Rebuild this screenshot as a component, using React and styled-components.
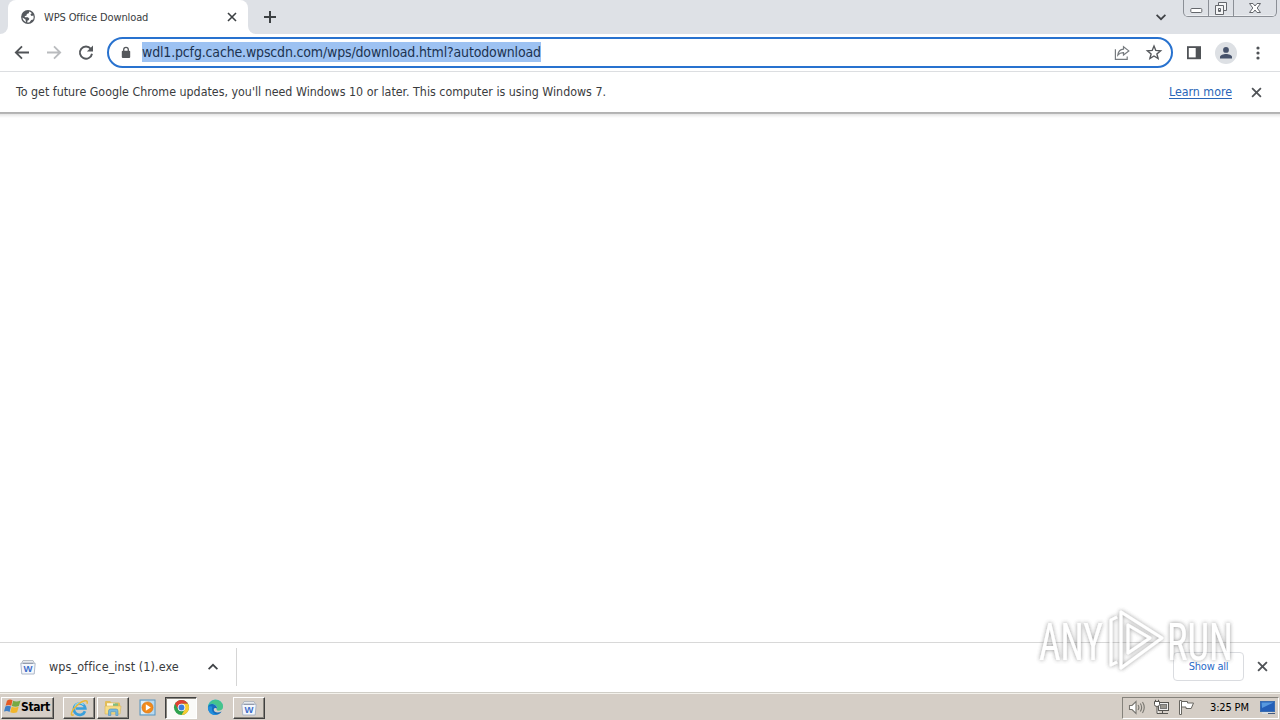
import styled, { createGlobalStyle, css } from "styled-components"

const GlobalStyle = createGlobalStyle`
    * {
        box-sizing: border-box;
    }
    body {
        margin: 0;
        overflow: hidden;
        font-family: "DejaVu Sans Condensed", "DejaVu Sans", Tahoma, sans-serif;
        font-stretch: condensed;
        color: #3a3c3e;
    }
    svg {
        display: block;
        flex-shrink: 0;
    }
`
const Screen = styled.div`
    width: 1280px;
    height: 720px;
    display: flex;
    flex-direction: column;
    background: #fff;
    overflow: hidden;
`
const Label = styled.span`
    font-size: ${(props) => props.$size || 12}px;
    letter-spacing: ${(props) => props.$spacing || 0}px;
    font-weight: ${(props) => (props.$bold ? "bold" : "normal")};
    color: ${(props) => props.$color || "#3a3c3e"};
    white-space: nowrap;
`

// tab strip
const TabStrip = styled.div`
    height: 34px;
    flex-shrink: 0;
    display: flex;
    background: #dee1e6;
`
const TabEdge = styled.div`
    width: 8px;
    background: #fff;

    &::before {
        content: "";
        display: block;
        height: 34px;
        background: #dee1e6;
        border-radius: ${(props) => (props.$right ? "0 0 0 8px" : "0 0 8px 0")};
    }
`
const Tab = styled.div`
    width: 240px;
    display: flex;
    align-items: center;
    padding: 0 11px 0 13px;
    background: #fff;
    border-radius: 8px 8px 0 0;
`
const TabTitle = styled.div`
    flex: 1;
    padding-left: 9px;
    line-height: 32px;
`
const NewTab = styled.div`
    padding: 11px 0 0 8px;
`
const TabSearch = styled.div`
    margin-left: auto;
    padding: 12px 17px 0 0;
`
const WindowButtons = styled.div`
    display: flex;
    width: 94px;
    height: 17px;
    margin-right: 3px;
    border: 1px solid #8b8f96;
    border-top: none;
    border-radius: 0 0 5px 5px;
    overflow: hidden;
`
const WindowButton = styled.div`
    width: ${(props) => props.$width}px;
    display: flex;
    justify-content: center;
    align-items: flex-start;
    border-right: ${(props) => (props.$last ? "none" : "1px solid #8b8f96")};
    box-shadow: inset 0 -1px #eceef1;
`

// toolbar
const Toolbar = styled.div`
    height: 38px;
    flex-shrink: 0;
    display: flex;
    align-items: center;
    padding: 0 20px 0 12px;
    border-bottom: 1px solid #dcdee1;
`
const NavButtons = styled.div`
    display: flex;
    gap: 12px;
    width: 95px;
`
const AddressBar = styled.div`
    width: 1066px;
    height: 31px;
    display: flex;
    align-items: center;
    padding: 0 8px 0 11px;
    border: 2px solid #2872cf;
    border-radius: 16px;
    background: #fff;
`
const Url = styled.div`
    height: 20px;
    margin: 0 0 1px 10px;
    line-height: 20px;
    background: #9dc2f2;
`
const AddressActions = styled.div`
    margin-left: auto;
    display: flex;
    gap: 14px;
`
const ToolbarActions = styled.div`
    flex: 1;
    display: flex;
    align-items: center;
    justify-content: flex-end;
`
const Avatar = styled.div`
    width: 22px;
    height: 22px;
    margin: 0 19px 0 14px;
    border-radius: 50%;
    background: #dde0e4;
    display: flex;
    align-items: center;
    justify-content: center;
`

// update notice
const InfoBar = styled.div`
    height: 40px;
    flex-shrink: 0;
    display: flex;
    align-items: center;
    padding: 0 18px 0 16px;
`
const LearnMore = styled.a`
    margin-left: auto;
    margin-right: 19px;
    font-size: 12.3px;
    color: #2a66b8;
    text-decoration: underline;
    text-underline-offset: 2px;
`
const Page = styled.div`
    flex: 1;
    background: linear-gradient(#b0b0b0 0, #b8b8b8 2px, #e4e4e4 2px, #f3f3f3 4px, #fff 6px);
`

// downloads
const DownloadBar = styled.div`
    height: 50px;
    flex-shrink: 0;
    display: flex;
    align-items: center;
    padding: 0 12px 2px 20px;
    border-top: 1px solid #d8d8d8;
`
const DownloadItem = styled.div`
    width: 217px;
    height: 38px;
    display: flex;
    align-items: center;
    border-right: 1px solid #d5d5d5;
`
const FileName = styled.div`
    width: 172px;
    padding: 0 0 2px 13px;
`
const ShowAll = styled.button`
    width: 71px;
    height: 29px;
    margin-left: auto;
    margin-right: 13px;
    padding: 0 0 3px;
    border: 1px solid #dadce0;
    border-radius: 4px;
    background: #fff;
    font-family: inherit;
    font-stretch: condensed;
`

// taskbar
const Taskbar = styled.div`
    height: 28px;
    flex-shrink: 0;
    display: flex;
    align-items: center;
    padding: 2px 1px 0 1px;
    background: #d5cec6;
    border-top: 1px solid #d0cec7;
    box-shadow: inset 0 1px #f4f2ec;
`
const raised = css`
    border: 1px solid;
    border-color: #fff #404040 #404040 #fff;
    box-shadow: inset -1px -1px #88857e;
`
const pressed = css`
    border: 1px solid;
    border-color: #404040 #fff #fff #404040;
    box-shadow: inset 1px 1px #88857e;
    background: #fafaf8;
`
const StartButton = styled.div`
    ${raised}
    width: 53px;
    height: 22px;
    display: flex;
    align-items: center;
    padding: 0 0 2px 2px;
    line-height: 18px;
    margin-right: 9px;
`
const TaskButton = styled.div`
    width: 32px;
    height: 22px;
    margin-right: 2px;
    display: flex;
    align-items: center;
    justify-content: center;
    ${(props) => props.$raised && raised}
    ${(props) => props.$pressed && pressed}
`
const Tray = styled.div`
    width: 157px;
    height: 22px;
    margin-left: auto;
    display: flex;
    align-items: center;
    padding-left: 5px;
    border: 1px solid;
    border-color: #85827b #fff #fff #85827b;
`
const TrayIcons = styled.div`
    display: flex;
    gap: 7px;
    width: 82px;
`
const Clock = styled.div`
    width: 50px;
    padding-bottom: 4px;
`
const Watermark = styled.div`
    position: absolute;
    left: 1030px;
    top: 600px;
    opacity: 0.85;
    pointer-events: none;
`

const Cross = ({ size = 10, color = "#3c4043", weight = 1.8 }) => (
    <svg width={size} height={size} viewBox="0 0 10 10" stroke={color} strokeWidth={weight}>
        <path d="M1 1l8 8M9 1L1 9" />
    </svg>
)

const Globe = () => (
    <svg width="14" height="14" viewBox="0 0 14 14">
        <circle cx="7" cy="7" r="6.9" fill="#55595e" />
        <path d="M8.2 1.6L7.8 3.3 5.8 4 5.6 5.6 3.6 6.2 4 7.3H6.9L8.4 8.8 7.6 10.2 6.6 10.4 6.2 12.5A5.6 5.6 0 0 0 8.6 12.3L10.2 10 12.2 9.5A5.6 5.6 0 0 0 12.4 5.6L10.6 6 9.3 4.8 10.6 3.6 10.2 2.4Z" fill="#fff" />
        <path d="M1.5 7.6L4.5 9.6 5 12.2A5.6 5.6 0 0 1 1.5 7.6Z" fill="#fff" />
    </svg>
)

const Arrow = ({ color, flip }) => (
    <svg width="20" height="20" viewBox="0 0 20 20" fill="none" stroke={color} strokeWidth="1.8">
        <path d={flip ? "M3 9.5H16M10 3.3L16.2 9.5 10 15.7" : "M17 9.5H4M10 3.3L3.8 9.5 10 15.7"} />
    </svg>
)

const Reload = () => (
    <svg width="20" height="20" viewBox="0 0 20 20" fill="none">
        <path d="M14.8 5.8A6.1 6.1 0 1 0 16 10.7" stroke="#55585c" strokeWidth="1.9" />
        <path d="M17 2.5V8.6H10.9Z" fill="#55585c" />
    </svg>
)

const Lock = () => (
    <svg width="12" height="14" viewBox="0 0 12 14">
        <path d="M3.7 5.5V3.6a2.3 2.3 0 0 1 4.6 0V5.5" fill="none" stroke="#55585c" strokeWidth="1.3" />
        <rect x="1.8" y="4.8" width="8.4" height="7.2" rx="1" fill="#55585c" />
    </svg>
)

const Share = () => (
    <svg width="18" height="18" viewBox="0 0 18 18" fill="none" stroke="#777b7f" strokeWidth="1.2">
        <path d="M2.4 5.2V15.4H14.2V12.4" />
        <path d="M10.5 2.8L15.8 6.9 10.5 11V8.7C8 8.6 6.3 9.3 4.8 11.1 5.2 8 7 5.5 10.5 5.2Z" />
    </svg>
)

const Star = () => (
    <svg width="18" height="18" viewBox="0 0 18 18" fill="none" stroke="#55585c" strokeWidth="1.4">
        <path d="M9 2L10.8 6.4 15.6 6.8 11.9 9.9 13.1 14.5 9 12 4.9 14.5 6.1 9.9 2.4 6.8 7.2 6.4Z" />
    </svg>
)

const SidePanel = () => (
    <svg width="14" height="14" viewBox="0 0 14 14">
        <rect x=".9" y="1.1" width="12.2" height="11.2" fill="#fff" stroke="#505357" strokeWidth="1.8" />
        <path d="M8.7 1h5v12h-5z" fill="#505357" />
    </svg>
)

const Person = () => (
    <svg width="12" height="12" viewBox="0 0 12 12" fill="#46526b">
        <circle cx="6" cy="2.9" r="2.9" />
        <path d="M0 11.5V10C0 8 3.5 7 6 7s6 1 6 3v1.5z" />
    </svg>
)

const Dots = () => (
    <svg width="4" height="14" viewBox="0 0 4 14" fill="#505357">
        <circle cx="2" cy="2" r="1.6" />
        <circle cx="2" cy="7" r="1.6" />
        <circle cx="2" cy="12" r="1.6" />
    </svg>
)

const Chevron = ({ up }) => (
    <svg width="10" height="10" viewBox="0 0 10 10" fill="none" stroke="#3f4246" strokeWidth="1.7">
        <path d={up ? "M.6 7.2L5 2.8 9.4 7.2" : "M.6 2.8L5 7.2 9.4 2.8"} />
    </svg>
)

const Installer = () => (
    <svg width="16" height="16" viewBox="0 0 16 16">
        <path d="M1.5 4.5L3 1.5H13L14.5 4.5Z" fill="#e7eaee" stroke="#a8aeb8" strokeWidth=".8" />
        <path d="M.8 4.3H15.2L14.2 15H1.8Z" fill="#f4f7fc" stroke="#a5b0c3" strokeWidth=".9" />
        <path d="M3 4.3H13" stroke="#8b94a4" strokeWidth="1" />
        <text x="8" y="12.6" textAnchor="middle" fontFamily="Liberation Sans, sans-serif" fontSize="9.5" fontWeight="bold" fill="#416fca">W</text>
    </svg>
)

const WindowsFlag = () => (
    <svg width="17" height="17" viewBox="0 0 16 16">
        <path d="M2.8 2.5Q5.5 .6 8 2.2L6.8 7.4Q4.5 6 1.5 7.2Z" fill="#e55b24" />
        <path d="M8.6 2.6Q11.8 4.2 15.6 2.3L14 7.6Q11 9 7.4 7.6Z" fill="#76a943" />
        <path d="M1.3 7.9Q4 6.6 6.6 8.1L5.2 13.2Q3 11.7 0 12.8Z" fill="#3f7fc6" />
        <path d="M7.2 8.3Q10.4 9.7 13.8 8.2L12.3 13.4Q9 14.8 5.9 13.5Z" fill="#f2b62b" />
    </svg>
)

const Explorer = () => (
    <svg width="19" height="18" viewBox="0 0 19 18" fill="none">
        <path d="M15 12.2A5.7 5.7 0 1 1 15.3 9.5H6" stroke="#3aa0dc" strokeWidth="2.7" />
        <path d="M4.8 8.4A4.8 4.8 0 0 1 13.5 6" stroke="#90dcf8" strokeWidth="1.1" />
        <path d="M3.7 15.6C-.2 18 .8 11.8 7.2 6.1 13.5 .7 18.5 .2 17 4.7" stroke="#e9b838" strokeWidth="1.5" />
    </svg>
)

const Folder = () => (
    <svg width="18" height="18" viewBox="0 0 18 18">
        <path d="M1 3Q1 2 2 2H6L7.5 3.5H15Q16 3.5 16 5V15H1Z" fill="#e2bd58" />
        <path d="M3 4.2H11V8H3Z" fill="#fff7dc" />
        <path d="M9 4.5H14V8H9Z" fill="#7fbf84" />
        <path d="M1 7H17L16 15H1Z" fill="#f8dd83" stroke="#d7b45a" strokeWidth=".6" />
        <path d="M4.5 16.5V12Q4.5 10 6.5 10H12Q14 10 14 12V16.5H11.8V12.8H6.8V16.5Z" fill="#77b9df" stroke="#4b8dba" strokeWidth=".6" />
    </svg>
)

const MediaPlayer = () => (
    <svg width="17" height="17" viewBox="0 0 17 17">
        <rect x="1" y="1" width="15" height="15" fill="#b8d9ef" stroke="#5694c0" />
        <path d="M2 2H9V15H2Z" fill="#dceefa" />
        <circle cx="8.5" cy="8.5" r="5.6" fill="#f18a1c" stroke="#d46e0e" strokeWidth=".6" />
        <path d="M6.8 5.3V11.7L11.8 8.5Z" fill="#fff" />
    </svg>
)

const ChromeLogo = () => (
    <svg width="17" height="17" viewBox="0 0 18 18">
        <circle cx="9" cy="9" r="8" fill="#2fa24f" />
        <path d="M2.1 5L5.6 11 9 9V5H15.9A8 8 0 0 0 2.1 5Z" fill="#df4032" />
        <path d="M15.9 5A8 8 0 0 1 9 17L12.5 11 9 5Z" fill="#f8cb32" />
        <circle cx="9" cy="9" r="4" fill="#fff" />
        <circle cx="9" cy="9" r="3.1" fill="#3b7ddd" />
    </svg>
)

const EdgeLogo = () => (
    <svg width="17" height="17" viewBox="0 0 18 18">
        <path d="M1 9A8 8 0 0 1 17 8C17 11 14.8 12.2 12.4 12.2 10.7 12.2 9.7 11.3 10.5 10.2 12 8 9 5.8 6 6.2 3 6.6 1.5 8.2 1 10Z" fill="#35bdb5" />
        <path d="M9 1A8 8 0 0 1 17 8C17 10.8 15 12.2 12.5 12.2 10.5 12.2 9.8 11.2 10.6 10 11.9 5.8 7 4 3 5.2A8 8 0 0 1 9 1Z" fill="#50c875" opacity=".65" />
        <path d="M1 9C1.4 5.9 4.7 4.8 7.2 5.7 10 6.6 11 8.5 10.5 10.2 9 9 7.2 9.7 7.2 11.4 7.2 14 11 15.4 15.5 13.3A8 8 0 0 1 1 9Z" fill="#176dbd" />
        <path d="M5.8 8.2C3.7 12.3 7.2 16.8 12 16.3 6 18.8 1 14.7 1 9 2 7.5 4 7.1 5.8 8.2Z" fill="#218edc" />
    </svg>
)

const Speaker = () => (
    <svg width="18" height="18" viewBox="0 0 18 18" fill="none" stroke="#77756f" strokeWidth="1.1">
        <path d="M1.5 6.5H4L8 2.5V14.5L4 10.5H1.5Z" fill="#fff" />
        <path d="M10 6Q11.8 8.5 10 11M12.3 4.5Q15 8.5 12.3 12.5M14.5 3Q18 8.5 14.5 14" />
    </svg>
)

const Network = () => (
    <svg width="18" height="18" viewBox="0 0 18 18" fill="none" stroke="#55534f">
        <rect x="5.5" y="3.5" width="10" height="8" fill="#eee" />
        <rect x="7.5" y="5.5" width="6" height="4" fill="#99968f" stroke="#777" />
        <path d="M9.5 12V14.5M6 14.5H15" />
        <path d="M1.5 2.5H6.5V5.5Q6.5 7.5 4 7.5 1.5 7.5 1.5 5.5ZM2.5 .8V3M5.5 .8V3M4 8V14.5H6" fill="#fff" />
    </svg>
)

const Flag = () => (
    <svg width="18" height="18" viewBox="0 0 18 18" fill="#fff" stroke="#686660" strokeWidth="1">
        <path d="M1.5 1.5H3.5V15.5H1.5Z" />
        <path d="M3.5 2.5H9.5V4H15.5L13.2 9.5H8V8H3.5Z" />
    </svg>
)

const Desktop = () => (
    <svg width="17" height="15" viewBox="0 0 17 15">
        <rect x=".5" y="1.5" width="14" height="10" fill="#245fb8" stroke="#3a6db0" />
        <path d="M1.5 2.5H13.5L2 8Z" fill="#5799df" />
        <path d="M2 13H12" stroke="#dcebfa" />
        <path d="M8 13.5H15" stroke="#425b80" />
    </svg>
)

const LogoText = styled.text`
    font-family: Roboto, "Liberation Sans", sans-serif;
    font-size: 52px;
    font-weight: 400;
`

const AnyRun = () => (
    <svg width="210" height="80" viewBox="0 0 210 80">
        <defs>
            <filter id="glow" x="-10%" y="-20%" width="120%" height="140%">
                <feDropShadow dx="0" dy="0" stdDeviation="2" floodColor="#555" floodOpacity=".75" />
            </filter>
        </defs>
        <g filter="url(#glow)" fill="#fff">
            <LogoText x="9" y="60" textLength="64" lengthAdjust="spacingAndGlyphs">ANY</LogoText>
            <LogoText x="137" y="60" textLength="66" lengthAdjust="spacingAndGlyphs">RUN</LogoText>
            <g fill="none" stroke="#fff" strokeWidth="3" strokeLinejoin="round">
                <path d="M91 12L132 38 91 68Z" />
                <path d="M98 25L120 38 98 53Z" />
                <path d="M87 17L81 20V65L87 62" />
            </g>
        </g>
    </svg>
)

const App = () => {
  return (
        <Screen>
            <GlobalStyle/>
            <TabStrip>
                <TabEdge/>
                <Tab>
                    <Globe/>
                    <TabTitle>
                        <Label $size={11} $spacing={-0.12}>WPS Office Download</Label>
                    </TabTitle>
                    <Cross weight={1.6}/>
                </Tab>
                <TabEdge $right/>
                <NewTab>
                    <svg width="12" height="12" viewBox="0 0 12 12" stroke="#3c4043" strokeWidth="2">
                        <path d="M6 0v12M0 6h12"/>
                    </svg>
                </NewTab>
                <TabSearch>
                    <Chevron/>
                </TabSearch>
                <WindowButtons>
                    <WindowButton $width={25}>
                        <svg width="13" height="16" viewBox="0 0 13 16" fill="#fff" stroke="#64676c">
                            <rect x=".8" y="8.5" width="11" height="4" rx="1"/>
                        </svg>
                    </WindowButton>
                    <WindowButton $width={25}>
                        <svg width="14" height="16" viewBox="0 0 14 16" fill="#f4f5f6" stroke="#64676c">
                            <path d="M4.5 2.5H12.5V10.5H4.5Z"/>
                            <path d="M1.5 5.5H9.5V14.5H1.5ZM4.5 8.5V11.5H6.5V8.5Z" fillRule="evenodd"/>
                        </svg>
                    </WindowButton>
                    <WindowButton $width={42} $last>
                        <svg width="14" height="16" viewBox="0 0 14 16" fill="#fff" stroke="#64676c">
                            <path d="M1.5 3.5H5L7 6 9 3.5H12.5L9.2 8 12.5 12.5H9L7 10 5 12.5H1.5L4.8 8Z"/>
                        </svg>
                    </WindowButton>
                </WindowButtons>
            </TabStrip>

            <Toolbar>
                <NavButtons>
                    <Arrow color="#505357"/>
                    <Arrow color="#b9bbbe" flip/>
                    <Reload/>
                </NavButtons>
                <AddressBar>
                    <Lock/>
                    <Url>
                        <Label $size={14} $spacing={-0.16} $color="#1c3350">wdl1.pcfg.cache.wpscdn.com/wps/download.html?autodownload</Label>
                    </Url>
                    <AddressActions>
                        <Share/>
                        <Star/>
                    </AddressActions>
                </AddressBar>
                <ToolbarActions>
                    <SidePanel/>
                    <Avatar>
                        <Person/>
                    </Avatar>
                    <Dots/>
                </ToolbarActions>
            </Toolbar>

            <InfoBar>
                <Label $size={12.35}>To get future Google Chrome updates, you'll need Windows 10 or later. This computer is using Windows 7.</Label>
                <LearnMore>Learn more</LearnMore>
                <Cross size={11} weight={1.6} color="#505357"/>
            </InfoBar>

            <Page/>

            <DownloadBar>
                <DownloadItem>
                    <Installer/>
                    <FileName>
                        <Label $size={12.5} $spacing={0.08}>wps_office_inst (1).exe</Label>
                    </FileName>
                    <Chevron up/>
                </DownloadItem>
                <ShowAll>
                    <Label $size={11} $spacing={-0.25} $color="#2a6bc8">Show all</Label>
                </ShowAll>
                <Cross size={11} weight={1.7} color="#505357"/>
            </DownloadBar>

            <Taskbar>
                <StartButton>
                    <WindowsFlag/>
                    <Label $size={12} $spacing={-0.4} $bold $color="#000">Start</Label>
                </StartButton>
                <TaskButton $raised>
                    <Explorer/>
                </TaskButton>
                <TaskButton $raised>
                    <Folder/>
                </TaskButton>
                <TaskButton>
                    <MediaPlayer/>
                </TaskButton>
                <TaskButton $pressed>
                    <ChromeLogo/>
                </TaskButton>
                <TaskButton>
                    <EdgeLogo/>
                </TaskButton>
                <TaskButton $raised>
                    <Installer/>
                </TaskButton>
                <Tray>
                    <TrayIcons>
                        <Speaker/>
                        <Network/>
                        <Flag/>
                    </TrayIcons>
                    <Clock>
                        <Label $size={11} $spacing={-0.15} $color="#000">3:25 PM</Label>
                    </Clock>
                    <Desktop/>
                </Tray>
            </Taskbar>

            <Watermark>
                <AnyRun/>
            </Watermark>
        </Screen>
  )
}

export default App
